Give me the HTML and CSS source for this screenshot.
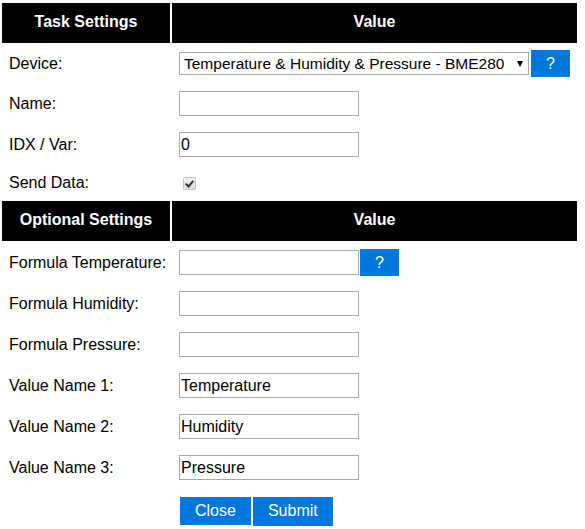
FILE: index.html
```html
<!DOCTYPE html>
<html>

<head>
  <meta charset="UTF-8" />
  <meta name="viewport" content="width=device-width, initial-scale=1.0" />
  <title>Task Settings</title>
  <link rel="stylesheet" href="styles.css">
</head>

<body>
  <form class="task-form" onsubmit="return false">
    <table class="settings">
      <tr>
        <th class="label-col">Task Settings</th>
        <th>Value</th>
      </tr>
      <tr>
        <td>Device:</td>
        <td><span class="select-wrap"><select name="device">
              <option>Temperature &amp; Humidity &amp; Pressure - BME280</option>
            </select></span><a class="button help" href="#">?</a></td>
      </tr>
      <tr>
        <td>Name:</td>
        <td><input type="text" name="taskname" value=""></td>
      </tr>
      <tr>
        <td>IDX / Var:</td>
        <td><input type="text" name="taskidx" value="0"></td>
      </tr>
      <tr>
        <td>Send Data:</td>
        <td><input type="checkbox" name="senddata" class="check" checked></td>
      </tr>
      <tr>
        <th class="label-col">Optional Settings</th>
        <th>Value</th>
      </tr>
      <tr>
        <td>Formula Temperature:</td>
        <td><input type="text" name="formula1" value=""><a class="button help help-formula" href="#">?</a></td>
      </tr>
      <tr>
        <td>Formula Humidity:</td>
        <td><input type="text" name="formula2" value=""></td>
      </tr>
      <tr>
        <td>Formula Pressure:</td>
        <td><input type="text" name="formula3" value=""></td>
      </tr>
      <tr>
        <td>Value Name 1:</td>
        <td><input type="text" name="valuename1" value="Temperature"></td>
      </tr>
      <tr>
        <td>Value Name 2:</td>
        <td><input type="text" name="valuename2" value="Humidity"></td>
      </tr>
      <tr>
        <td>Value Name 3:</td>
        <td><input type="text" name="valuename3" value="Pressure"></td>
      </tr>
      <tr>
        <td></td>
        <td class="actions"><a class="button" href="#">Close</a><input class="button" type="submit" value="Submit"></td>
      </tr>
    </table>
  </form>
</body>

</html>
```

FILE: styles.css
```css
body {
  margin: 0;
  padding-top: 1px;
  font-family: "Liberation Sans", Arial, sans-serif;
  font-size: 16px;
  color: black;
  background: white;
}

.task-form {
  margin: 0;
}

.settings {
  width: 579px;
  table-layout: fixed;
  border-spacing: 2px;
  color: black;
}

.settings th {
  padding: 10px 10px 12px;
  line-height: 18px;
  background-color: black;
  color: #ffffff;
  font-weight: bold;
}

.settings th.label-col {
  width: 148px;
}

.settings td {
  padding: 7px;
  white-space: nowrap;
}

.settings input[type=text] {
  box-sizing: border-box;
  width: 180px;
  height: 25px;
  margin: 0;
  padding: 1px;
  border: 1px solid #a9a9a9;
  border-radius: 0;
  font: inherit;
  color: black;
}

.select-wrap {
  position: relative;
  display: inline-block;
}

.select-wrap select {
  appearance: none;
  box-sizing: border-box;
  width: 350px;
  height: 23px;
  margin: 0;
  padding: 0 14px 0 4px;
  border: 1px solid #a9a9a9;
  border-radius: 0;
  background: white;
  color: black;
  font-family: inherit;
  font-size: 15.5px;
}

.select-wrap::after {
  content: "";
  position: absolute;
  right: 6px;
  top: 9px;
  border-left: 3.5px solid transparent;
  border-right: 3.5px solid transparent;
  border-top: 6px solid black;
  pointer-events: none;
}

.check {
  appearance: none;
  position: relative;
  display: block;
  box-sizing: border-box;
  width: 13px;
  height: 13px;
  margin: 4px 3px 2px 4px;
  border: 1px solid #c4c4c4;
  border-radius: 2px;
  background: linear-gradient(#f2f2f2, #dedede);
}

.check:checked::after {
  content: "";
  position: absolute;
  left: 3px;
  top: 1px;
  width: 3px;
  height: 6px;
  border-right: 2px solid #333;
  border-bottom: 2px solid #333;
  transform: rotate(40deg);
}

.button {
  padding: 5px 15px;
  background-color: #0077dd;
  color: #ffffff;
  text-decoration: none;
  border: none;
  border-radius: 0;
}

.help {
  margin-left: 2px;
}

.help-formula {
  margin-left: 1px;
}

.actions .button {
  display: inline-block;
  margin: 1px 1px 0 1px;
  font: inherit;
  line-height: 18px;
  vertical-align: top;
}

.actions input.button {
  padding-bottom: 6px;
}
```
